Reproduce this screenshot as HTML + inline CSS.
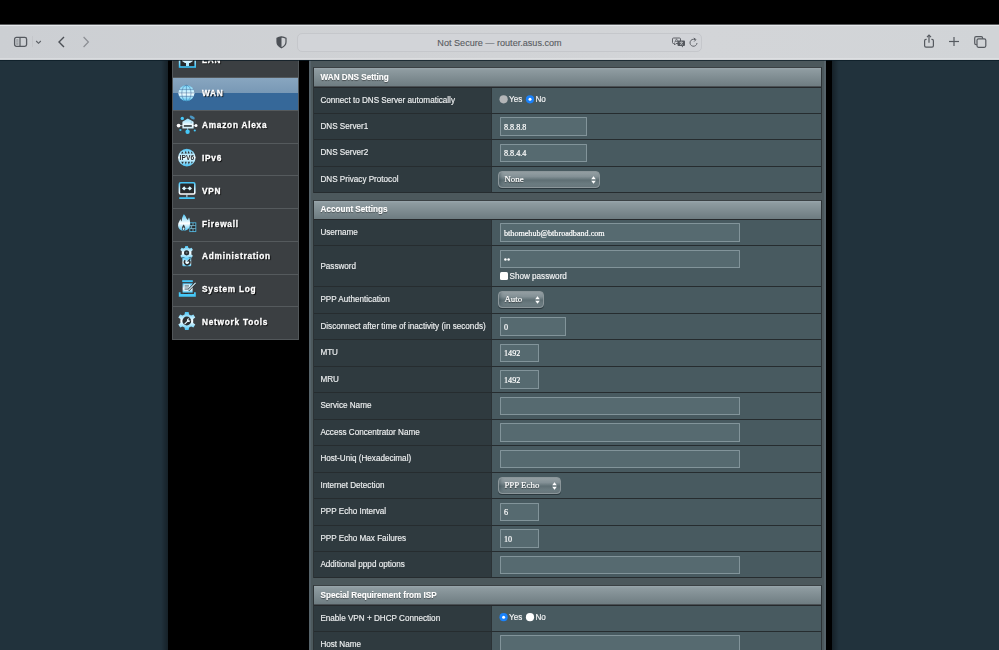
<!DOCTYPE html>
<html><head><meta charset="utf-8">
<style>
*{margin:0;padding:0;box-sizing:border-box}
html,body{width:999px;height:650px;overflow:hidden;background:#21323c;font-family:"Liberation Sans",sans-serif}
#page{will-change:transform}
.abs{position:absolute}
#blk{position:absolute;left:0;top:0;width:999px;height:24px;background:#000;z-index:20}
#tb{position:absolute;left:0;top:24px;width:999px;height:36px;background:linear-gradient(to right,#cccfd3 0,#d0d2d5 40%,#d3d5d8 70%,#d1d4d7 100%);z-index:20}
#tb .hl{position:absolute;left:0;top:0;width:999px;height:2px;background:linear-gradient(to bottom,#5a5c5e 0,#5a5c5e 1px,#e6e9ec 1px)}
#tb .lb{position:absolute;left:0;bottom:1px;width:999px;height:1px;background:rgba(255,255,255,.25)}
#url{position:absolute;left:297px;top:9px;width:405px;height:19px;border-radius:5px;background:#d2d4d8;border:1px solid #c5c7cb}
#url .t{position:absolute;left:0;width:100%;top:3.6px;text-align:center;font-size:9.1px;color:#595c62;-webkit-text-stroke:.12px #595c62;line-height:10px}
#page{position:absolute;left:0;top:0;width:999px;height:650px;background:#21323c;overflow:hidden}
#pline{z-index:19;position:absolute;left:0;top:60px;width:999px;height:1px;background:rgba(10,25,35,.7)}
#shl{position:absolute;left:161px;top:60px;width:7px;height:590px;background:linear-gradient(to right,rgba(0,0,0,0),rgba(0,0,0,.35))}
#shr{position:absolute;left:832px;top:60px;width:7px;height:590px;background:linear-gradient(to left,rgba(0,0,0,0),rgba(0,0,0,.35))}
#cont{position:absolute;left:168px;top:0;width:664px;height:650px;background:#000}
#menu{position:absolute;left:172px;top:10px;width:127px;height:329.5px;background:#3b3f42;border:1px solid #52575a;border-top:none}
.mi{position:absolute;left:0;width:125px;height:32.8px;border-top:1px solid #555a5d}
.mi .l{position:absolute;left:29px;top:9.5px;font-size:8.3px;font-weight:bold;letter-spacing:.74px;color:#fff;-webkit-text-stroke:.3px #fff;text-shadow:.8px .8px 1px #000;line-height:10px;white-space:nowrap}
.mi svg{position:absolute;left:4px;top:5px;filter:blur(.2px)}
.sel{background:linear-gradient(to bottom,#88a6c0 0,#7898b5 15px,#366899 15px,#366899 100%)}
#panel{position:absolute;left:309px;top:0;width:517px;height:650px;background:#4c585c;border-left:2px solid #56636a;border-right:2px solid #56636a}
.tbl{position:absolute;left:313px;width:509px;background:#2f3a3f;border:1px solid #2c3235;border-top-color:#3b4144;border-bottom:none}
.hd{position:absolute;left:0;top:0;width:507px;height:19px;background:linear-gradient(to bottom,#9aa7ad 0,#8e9ba0 2px,#6d7b80 100%);border-bottom:1px solid #25292c}
.hd2{box-shadow:inset 0 -1px 0 #4a5054}
.hd .t{position:absolute;left:6.6px;top:5px;font-size:8.15px;font-weight:bold;color:#fff;-webkit-text-stroke:.15px #fff;line-height:10px;text-shadow:0 .6px 1px rgba(0,0,0,.45)}
.r{position:absolute;left:0;width:507px;border-bottom:1px solid #262c2f}
.r .th{position:absolute;left:0;top:0;width:177px;height:100%;background:#2f3a3f}
.r .td{position:absolute;left:177px;top:0;width:330px;height:100%;background:#485a60;box-shadow:inset 1px 0 0 #2b3235}
.r .lab{position:absolute;left:6.4px;font-size:8.15px;color:#eef0f1;-webkit-text-stroke:.15px #eef0f1;line-height:10px;white-space:nowrap}
.inp{position:absolute;background:#566a70;border:1px solid #82949a;border-radius:.5px}
.inp .v{position:absolute;left:3px;font-family:"Liberation Serif",serif;font-size:8.15px;color:#fff;-webkit-text-stroke:.2px #fff;line-height:10px;white-space:nowrap}
.sl{position:absolute;border-radius:4px;border:1px solid #8b969a;background:linear-gradient(to bottom,#949fa3 0%,#849196 30%,#65757a 50%,#5f6f74 58%,#718085 80%,#889599 100%);box-shadow:0 1px 0 rgba(20,30,35,.55),inset 2px -2px 3px rgba(40,60,70,.35)}
.sl .v{position:absolute;left:5.4px;top:2px;text-shadow:0 1px 1px rgba(0,0,0,.55);font-family:"Liberation Serif",serif;font-size:8.9px;color:#fff;-webkit-text-stroke:.2px #fff;line-height:10px;white-space:nowrap}
.sl svg{position:absolute;right:3.5px;top:3.8px}
.rad{position:absolute;width:8px;height:8px;border-radius:50%}
.dot{position:absolute;left:2.7px;top:2.7px;width:2.6px;height:2.6px;border-radius:50%;background:#fff}
.cb{position:absolute;width:8px;height:8px;background:#fff;border-radius:1.5px}
.rt{position:absolute;font-size:8.15px;color:#f4f5f6;line-height:10px;-webkit-text-stroke:.15px #f4f5f6;white-space:nowrap}
</style></head><body>
<svg width="0" height="0" style="position:absolute"><defs>
<linearGradient id="gv" x1="0" y1="0" x2="0" y2="1"><stop offset="0" stop-color="#ffffff"/><stop offset=".45" stop-color="#d8f3ff"/><stop offset="1" stop-color="#35c0f5"/></linearGradient>
<linearGradient id="gvi" x1="0" y1="0" x2="0" y2="1"><stop offset="0" stop-color="#45c4f6"/><stop offset=".55" stop-color="#c8efff"/><stop offset="1" stop-color="#ffffff"/></linearGradient>
<linearGradient id="gw" x1="0" y1="0" x2="0" y2="1"><stop offset="0" stop-color="#ffffff"/><stop offset="1" stop-color="#9fe3ff"/></linearGradient>
<linearGradient id="gv2" x1="0" y1="0" x2="0" y2="1"><stop offset="0" stop-color="#8fdcfa"/><stop offset=".7" stop-color="#ffffff"/><stop offset="1" stop-color="#bfe9f9"/></linearGradient>
<linearGradient id="gv3" x1="0" y1="0" x2="0" y2="1"><stop offset="0" stop-color="#4cc6f6"/><stop offset=".6" stop-color="#ffffff"/><stop offset="1" stop-color="#4cc6f6"/></linearGradient>
<linearGradient id="gglobe" x1="0" y1="0" x2="0" y2="1"><stop offset="0" stop-color="#6fd4fb"/><stop offset=".55" stop-color="#f4fdff"/><stop offset="1" stop-color="#49c3f5"/></linearGradient>
<linearGradient id="gglobe2" x1="0" y1="0" x2="0" y2="1"><stop offset="0" stop-color="#4ec3f3"/><stop offset=".5" stop-color="#f6fdff"/><stop offset="1" stop-color="#45c0f3"/></linearGradient>
<linearGradient id="gflame" x1="0" y1="0" x2="0" y2="1"><stop offset="0" stop-color="#4cc6f6"/><stop offset=".55" stop-color="#ffffff"/><stop offset="1" stop-color="#4cc6f6"/></linearGradient>
<linearGradient id="ggear" x1="0" y1="0" x2="0" y2="1"><stop offset="0" stop-color="#45c4f6"/><stop offset=".5" stop-color="#ffffff"/><stop offset="1" stop-color="#45c4f6"/></linearGradient>
</defs></svg>
<div id="blk"></div>
<div id="tb">
  <div class="hl"></div><div class="lb"></div>
  <!-- sidebar icon -->
  <svg class="abs" style="left:13px;top:11px" width="16" height="13" viewBox="0 0 16 13">
    <rect x="1.6" y="2.4" width="12" height="9" rx="1.8" fill="none" stroke="#55595f" stroke-width="1.3"/>
    <line x1="7" y1="2.6" x2="7" y2="11.2" stroke="#55595f" stroke-width="1.2"/>
    <rect x="3.2" y="4.2" width="2.2" height="5.6" fill="#9a9da2"/>
    <line x1="3.2" y1="6" x2="5.4" y2="6" stroke="#cdd0d4" stroke-width=".5"/>
    <line x1="3.2" y1="7.8" x2="5.4" y2="7.8" stroke="#cdd0d4" stroke-width=".5"/>
  </svg>
  <div class="abs" style="left:32px;top:12px;width:1px;height:11px;background:#c4c6ca"></div>
  <svg class="abs" style="left:35px;top:16px" width="7" height="5" viewBox="0 0 7 5"><polyline points="1.2,1 3.5,3.3 5.8,1" fill="none" stroke="#5a5e64" stroke-width="1.1"/></svg>
  <svg class="abs" style="left:57px;top:12px" width="9" height="12" viewBox="0 0 9 12"><polyline points="7,1 2,6 7,11" fill="none" stroke="#4b4f55" stroke-width="1.4"/></svg>
  <svg class="abs" style="left:82px;top:12px" width="9" height="12" viewBox="0 0 9 12"><polyline points="1.6,1 6.4,6 1.6,11" fill="none" stroke="#8b8e93" stroke-width="1.2"/></svg>
  <!-- shield -->
  <svg class="abs" style="left:276px;top:11px" width="11" height="14" viewBox="0 0 11 14">
    <path d="M5.5 1.8 Q8.2 2.3 10 3.2 L10 7 Q10 10.6 5.5 12.8 Q1 10.6 1 7 L1 3.2 Q2.8 2.3 5.5 1.8Z" fill="none" stroke="#4c5056" stroke-width="1.2"/>
    <path d="M5.5 1.8 Q2.8 2.3 1 3.2 L1 7 Q1 10.6 5.5 12.8Z" fill="#4c5056"/>
  </svg>
  <div id="url"><div class="t">Not Secure — router.asus.com</div>
    <svg class="abs" style="left:374px;top:3px" width="14" height="11" viewBox="0 0 14 11">
      <path d="M1.5 1 H7.5 Q8.5 1 8.5 2 V5.5 Q8.5 6.5 7.5 6.5 H4 L2.5 8 V6.5 H1.5 Q0.5 6.5 0.5 5.5 V2 Q0.5 1 1.5 1Z" fill="none" stroke="#606369" stroke-width="1"/>
      <path d="M2.6 5.6 L4.5 1.8 L6.2 5.2 M3.2 4.4 H5.6" fill="none" stroke="#606369" stroke-width=".8"/>
      <path d="M6.5 3.5 H12 Q13 3.5 13 4.5 V8 Q13 9 12 9 H11 V10.5 L9.5 9 H6.5 Q5.5 9 5.5 8 V4.5 Q5.5 3.5 6.5 3.5Z" fill="#55585e"/>
      <path d="M7.6 5.4 H11 M9.3 4.4 V5.4 M8 8 L10.6 5.6 M8.4 5.8 L10.8 8" fill="none" stroke="#c9cbcf" stroke-width=".7"/>
    </svg>
    <svg class="abs" style="left:391px;top:2.6px" width="10" height="11" viewBox="0 0 10 11">
      <path d="M8 6 A3.5 3.5 0 1 1 6 2.6" fill="none" stroke="#606369" stroke-width="1"/>
      <polyline points="4.8,1 7,2.6 5.2,4.5" fill="none" stroke="#606369" stroke-width="1"/>
    </svg>
  </div>
  <!-- share -->
  <svg class="abs" style="left:923px;top:10px" width="12" height="14" viewBox="0 0 12 14">
    <path d="M3.6 5.4 H3 Q1.6 5.4 1.6 6.8 V11.8 Q1.6 13.2 3 13.2 H9 Q10.4 13.2 10.4 11.8 V6.8 Q10.4 5.4 9 5.4 H8.4" fill="none" stroke="#55595f" stroke-width="1.2"/>
    <line x1="6" y1="1.2" x2="6" y2="8.8" stroke="#55595f" stroke-width="1.2"/>
    <polyline points="4,3.2 6,1.2 8,3.2" fill="none" stroke="#55595f" stroke-width="1.2"/>
  </svg>
  <svg class="abs" style="left:948px;top:12px" width="12" height="11" viewBox="0 0 12 11">
    <line x1="6" y1="1.1" x2="6" y2="9.9" stroke="#55595f" stroke-width="1.2"/>
    <line x1="1" y1="5.5" x2="11" y2="5.5" stroke="#55595f" stroke-width="1.2"/>
  </svg>
  <svg class="abs" style="left:973px;top:11px" width="14" height="13" viewBox="0 0 14 13">
    <path d="M3.8 9.6 H3.1 Q1.7 9.6 1.7 8.2 V3 Q1.7 1.6 3.1 1.6 H8.2 Q9.6 1.6 9.6 3 V3.8" fill="none" stroke="#55595f" stroke-width="1.2"/>
    <rect x="4" y="3.8" width="8.8" height="8.5" rx="1.5" fill="none" stroke="#55595f" stroke-width="1.2"/>
  </svg>
</div>

<div id="page">
  <div id="shl"></div><div id="shr"></div>
  <div id="cont"></div>
  <div id="menu">
<div class="mi" style="top:34.25px"><svg style="position:absolute;left:1px;top:-1.25px;overflow:visible" width="26" height="26" viewBox="174 44 26 26">
<rect x="179.6" y="50" width="15.6" height="17" fill="#26292b" stroke="url(#gv)" stroke-width="1.6"/>
<path d="M182 58.5 H193 V61 L190 63 H189 V66 H186 V63 H185 L182 61Z" fill="url(#gw)"/>
</svg><div class="l">LAN</div></div>
<div class="mi sel" style="top:67.00px"><svg style="position:absolute;left:1px;top:2.00px;overflow:visible" width="26" height="26" viewBox="174 80 26 26">
<circle cx="186.4" cy="93.2" r="8" fill="url(#gglobe)"/>
<g fill="none" stroke="#3f6f9c" stroke-opacity=".7" stroke-width=".75">
<line x1="186.4" y1="85.2" x2="186.4" y2="101.2"/>
<ellipse cx="186.4" cy="93.2" rx="4.6" ry="8"/>
<line x1="179" y1="89.4" x2="193.8" y2="89.4"/>
<line x1="178.4" y1="92.9" x2="194.4" y2="92.9"/>
<line x1="179" y1="96.4" x2="193.8" y2="96.4"/>
</g>
</svg><div class="l">WAN</div></div>
<div class="mi" style="top:99.75px"><svg style="position:absolute;left:1px;top:1.25px;overflow:visible" width="26" height="26" viewBox="174 112 26 26">
<g stroke="#c8e8f5" stroke-width=".7"><line x1="178.6" y1="125.6" x2="196" y2="125.6"/><line x1="187.6" y1="128" x2="187.6" y2="131.7"/></g>
<circle cx="178.6" cy="125.6" r="1.9" fill="#ffffff"/>
<circle cx="196" cy="125.6" r="1.5" fill="#ffffff"/>
<circle cx="182.3" cy="118.4" r="1.7" fill="#45c8f8"/>
<circle cx="187.6" cy="131.7" r="2.2" fill="#45c8f8"/>
<circle cx="180.4" cy="130" r="1.1" fill="#45c8f8"/>
<circle cx="194.8" cy="130.5" r="1.1" fill="#45c8f8"/>
<ellipse cx="192.2" cy="117.5" rx="2.8" ry="1.4" transform="rotate(30 192.2 117.5)" fill="#4b97c4"/>
<path d="M182.4 121.8 L187.8 118.6 L193.6 121.8 V128.6 H182.4Z" fill="url(#gv2)"/>
<rect x="190.6" y="121.4" width="1.2" height="2" fill="#9fc9dc"/>
<rect x="183.8" y="125" width="8" height="1.9" fill="#4a5559"/>
</svg><div class="l">Amazon Alexa</div></div>
<div class="mi" style="top:132.50px"><svg style="position:absolute;left:1px;top:0.50px;overflow:visible" width="26" height="26" viewBox="174 144 26 26">
<circle cx="186.8" cy="157.6" r="8.8" fill="url(#gglobe2)"/>
<g fill="#2c3134">
<path d="M181 153.4 L182.4 151.4 L183.6 153.4Z M184.6 153.4 L185.8 150.8 L186.8 153.4Z M187.6 153.4 L188.6 150.8 L189.8 153.4Z M190.8 153.4 L191.6 151.6 L192.8 153.4Z"/>
<path d="M181.2 161.8 L182.6 164 L183.8 161.8Z M184.8 161.8 L185.8 164.6 L186.8 161.8Z M187.8 161.8 L188.8 164.6 L190 161.8Z M191 161.8 L191.8 163.8 L192.8 161.8Z"/>
</g>
<text x="187" y="160.2" text-anchor="middle" font-family="Liberation Sans" font-weight="bold" font-size="6.6" fill="#2a2e31" letter-spacing=".15">IPV6</text>
</svg><div class="l">IPv6</div></div>
<div class="mi" style="top:165.25px"><svg style="position:absolute;left:1px;top:0.75px;overflow:visible" width="26" height="26" viewBox="174 177 26 26">
<rect x="179.4" y="182.8" width="15.4" height="11.2" rx="1.2" fill="#26292b" stroke="url(#gvi)" stroke-width="1.6"/>
<path d="M181.9 188.4 L184.2 186.2 L186.1 188.4 L184.2 190.6Z M187.8 188.4 L189.7 186.2 L192 188.4 L189.7 190.6Z" fill="#d8f6ff"/>
<line x1="185" y1="188.4" x2="188.6" y2="188.4" stroke="#d8f6ff" stroke-width=".6"/>
<line x1="186.9" y1="194.6" x2="186.9" y2="197.5" stroke="#bfeeff" stroke-width="1"/>
<rect x="179" y="197.2" width="16" height="1.8" rx=".9" fill="#45c8f8"/>
</svg><div class="l">VPN</div></div>
<div class="mi" style="top:198.00px"><svg style="position:absolute;left:1px;top:0.00px;overflow:visible" width="26" height="26" viewBox="174 209 26 26">
<rect x="189.8" y="222.8" width="6" height="8.8" fill="#26292b" stroke="#4fb6e0" stroke-width=".9"/>
<g stroke="#8fd3ee" stroke-width=".7"><line x1="190" y1="225.6" x2="195.6" y2="225.6"/><line x1="190" y1="228.6" x2="195.6" y2="228.6"/><line x1="193" y1="222.8" x2="193" y2="225.6"/><line x1="191.6" y1="225.6" x2="191.6" y2="228.6"/><line x1="193" y1="228.6" x2="193" y2="231.6"/></g>
<path d="M183.8 214.2 C186.5 216.5 186.2 219 188 220 C188.3 218.8 188.6 218 189 217.6 C190.2 220 190.4 224 189.4 227 C188.6 229.5 186.5 230.8 183.6 230.8 C180.6 230.8 178.4 229 178.1 226 C177.9 223 179.5 221 180.4 219 C180.8 220.3 181.2 221 181.8 221.4 C181.6 218.8 182.6 216.2 183.8 214.2Z" fill="url(#gflame)"/>
<path d="M183.6 224.6 C184.8 226 185.4 227.6 185.2 229 C185 230 184.3 230.6 183.6 230.6 C182.8 230.6 182.1 230 182 229 C181.8 227.6 182.5 226 183.6 224.6Z" fill="#3a3f42"/>
<ellipse cx="183.6" cy="228.8" rx=".9" ry="1.3" fill="#c9f0ff"/>
</svg><div class="l">Firewall</div></div>
<div class="mi" style="top:230.75px"><svg style="position:absolute;left:1px;top:0.25px;overflow:visible" width="26" height="26" viewBox="174 242 26 26">
<rect x="182.4" y="257.4" width="8.8" height="8.8" rx="1" fill="url(#gv3)"/>
<path d="M189.3 260.4 A2.7 2.7 0 1 1 185.2 260.2" fill="none" stroke="#2a2e31" stroke-width="1.5"/><line x1="187.6" y1="261.6" x2="190.4" y2="258.6" stroke="#2a2e31" stroke-width="1.1"/>
<g transform="translate(186.6 252.8)">
<path d="M-1.3 -6.8 H1.3 L1.7 -5 L3.2 -4.2 L5 -5 L6.3 -2.9 L4.8 -1.6 V1.6 L6.3 2.9 L5 5 L3.2 4.2 L1.7 5 L1.3 6.8 H-1.3 L-1.7 5 L-3.2 4.2 L-5 5 L-6.3 2.9 L-4.8 1.6 V-1.6 L-6.3 -2.9 L-5 -5 L-3.2 -4.2 L-1.7 -5Z" fill="url(#ggear)"/>
<circle r="2.6" fill="#2a2e31"/><circle r="1" fill="#6a7479"/>
</g>
</svg><div class="l">Administration</div></div>
<div class="mi" style="top:263.50px"><svg style="position:absolute;left:1px;top:0.50px;overflow:visible" width="26" height="26" viewBox="174 275 26 26">
<rect x="182.2" y="280.2" width="10.6" height="1.9" fill="#45c8f8"/>
<rect x="182.6" y="283.3" width="10" height="9.3" fill="url(#gv3)"/>
<rect x="184" y="284.4" width="6" height="6.6" fill="#dff6ff"/>
<g stroke="#4a5358" stroke-width=".6"><line x1="184.6" y1="285.4" x2="189" y2="285.4"/><line x1="184.6" y1="286.8" x2="189" y2="286.8"/><line x1="184.6" y1="288.2" x2="188" y2="288.2"/><line x1="184.6" y1="289.6" x2="187" y2="289.6"/></g>
<line x1="195.6" y1="282.8" x2="188.2" y2="290.4" stroke="#2a2e31" stroke-width="2.4"/>
<line x1="195.6" y1="282.8" x2="188.2" y2="290.4" stroke="#d6f3ff" stroke-width="1.1"/>
<path d="M178.8 292.2 H180.6 V294 H194 V292.2 H195.8 V296.8 H178.8Z" fill="#45c8f8"/>
<rect x="184" y="293.2" width="4" height=".8" fill="#2a2e31"/>
</svg><div class="l">System Log</div></div>
<div class="mi" style="top:296.25px"><svg style="position:absolute;left:1px;top:-0.25px;overflow:visible" width="26" height="26" viewBox="174 307 26 26">
<g transform="translate(186.8 321)">
<path d="M-1.8 -9 H1.8 L2.3 -6.6 L4.3 -5.6 L6.6 -6.6 L8.5 -3.6 L6.4 -2.1 V2.1 L8.5 3.6 L6.6 6.6 L4.3 5.6 L2.3 6.6 L1.8 9 H-1.8 L-2.3 6.6 L-4.3 5.6 L-6.6 6.6 L-8.5 3.6 L-6.4 2.1 V-2.1 L-8.5 -3.6 L-6.6 -6.6 L-4.3 -5.6 L-2.3 -6.6Z" fill="url(#ggear)"/>
<circle r="4.4" fill="#2a2e31"/>
<path d="M-2.6 2.8 L0.2 0 C-0.2 -1.6 1 -3 2.6 -2.8 L1.6 -1.6 L2.1 -0.4 L3.2 -0.6 L3.6 -1.6 C3.8 0.2 2.2 1.4 0.8 0.9 L-1.8 3.6Z" fill="#e8f8ff"/>
</g>
</svg><div class="l">Network Tools</div></div>
  </div>
  <div id="panel"></div>
<div class="tbl" style="top:67px;height:126px"><div class="hd hd2" style="height:20px"><div class="t" style="top:4.50px">WAN DNS Setting</div></div><div class="r" style="top:20px;height:26px"><div class="th"><div class="lab" style="top:7.50px">Connect to DNS Server automatically</div></div><div class="td"><svg style="position:absolute;left:0;top:0;overflow:visible" width="1" height="1"><circle cx="12.600000000000023" cy="11.299999999999997" r="4.1" fill="#b4b6b8"/></svg><div class="rt" style="left:18px;top:7.10px">Yes</div><svg style="position:absolute;left:0;top:0;overflow:visible" width="1" height="1"><circle cx="39" cy="11.299999999999997" r="4.1" fill="#1a82fb"/><circle cx="39" cy="11.299999999999997" r="1.5" fill="#fff"/></svg><div class="rt" style="left:44.5px;top:7.10px">No</div></div></div><div class="r" style="top:46px;height:26px"><div class="th"><div class="lab" style="top:7.50px">DNS Server1</div></div><div class="td"><div class="inp" style="left:9px;top:3px;width:87px;height:19px"><div class="v" style="top:4.60px">8.8.8.8</div></div></div></div><div class="r" style="top:72px;height:27px"><div class="th"><div class="lab" style="top:8.00px">DNS Server2</div></div><div class="td"><div class="inp" style="left:9px;top:4px;width:87px;height:18px"><div class="v" style="top:4.10px">8.8.4.4</div></div></div></div><div class="r" style="top:99px;height:26px"><div class="th"><div class="lab" style="top:7.50px">DNS Privacy Protocol</div></div><div class="td"><div class="sl" style="left:7px;top:4px;width:102px;height:17px"><div class="v">None</div><svg width="5" height="8" viewBox="0 0 5 8"><path d="M2.5 0.2 L4.8 3.2 H0.2Z M2.5 7.8 L4.8 4.8 H0.2Z" fill="#fff"/></svg></div></div></div></div>
<div class="tbl" style="top:200px;height:378px"><div class="hd" style="height:19px"><div class="t" style="top:4.00px">Account Settings</div></div><div class="r" style="top:19px;height:26px"><div class="th"><div class="lab" style="top:7.50px">Username</div></div><div class="td"><div class="inp" style="left:9px;top:3px;width:240px;height:19px"><div class="v" style="top:4.60px">bthomehub@btbroadband.com</div></div></div></div><div class="r" style="top:45px;height:41px"><div class="th"><div class="lab" style="top:15.70px">Password</div></div><div class="td"><div class="inp" style="left:9px;top:4px;width:240px;height:18px"></div><svg style="position:absolute;left:0;top:0;overflow:visible" width="1" height="1"><circle cx="14.399999999999977" cy="13.399999999999977" r="1.25" fill="#fff"/><circle cx="17.600000000000023" cy="13.399999999999977" r="1.25" fill="#fff"/></svg><div class="cb" style="left:8.5px;top:26px"></div><div class="rt" style="left:18.5px;top:25.5px">Show password</div></div></div><div class="r" style="top:86px;height:27px"><div class="th"><div class="lab" style="top:8.00px">PPP Authentication</div></div><div class="td"><div class="sl" style="left:7px;top:4px;width:46px;height:17px"><div class="v">Auto</div><svg width="5" height="8" viewBox="0 0 5 8"><path d="M2.5 0.2 L4.8 3.2 H0.2Z M2.5 7.8 L4.8 4.8 H0.2Z" fill="#fff"/></svg></div></div></div><div class="r" style="top:113px;height:26px"><div class="th"><div class="lab" style="top:7.50px">Disconnect after time of inactivity (in seconds)</div></div><div class="td"><div class="inp" style="left:9px;top:3px;width:66px;height:19px"><div class="v" style="top:4.60px">0</div></div></div></div><div class="r" style="top:139px;height:27px"><div class="th"><div class="lab" style="top:8.00px">MTU</div></div><div class="td"><div class="inp" style="left:9px;top:4px;width:39px;height:18px"><div class="v" style="top:4.10px">1492</div></div></div></div><div class="r" style="top:166px;height:26px"><div class="th"><div class="lab" style="top:7.50px">MRU</div></div><div class="td"><div class="inp" style="left:9px;top:3px;width:39px;height:19px"><div class="v" style="top:4.60px">1492</div></div></div></div><div class="r" style="top:192px;height:27px"><div class="th"><div class="lab" style="top:8.00px">Service Name</div></div><div class="td"><div class="inp" style="left:9px;top:4px;width:240px;height:18px"></div></div></div><div class="r" style="top:219px;height:26px"><div class="th"><div class="lab" style="top:7.50px">Access Concentrator Name</div></div><div class="td"><div class="inp" style="left:9px;top:3px;width:240px;height:19px"></div></div></div><div class="r" style="top:245px;height:27px"><div class="th"><div class="lab" style="top:8.00px">Host-Uniq (Hexadecimal)</div></div><div class="td"><div class="inp" style="left:9px;top:4px;width:240px;height:18px"></div></div></div><div class="r" style="top:272px;height:26px"><div class="th"><div class="lab" style="top:7.50px">Internet Detection</div></div><div class="td"><div class="sl" style="left:7px;top:4px;width:63px;height:17px"><div class="v">PPP Echo</div><svg width="5" height="8" viewBox="0 0 5 8"><path d="M2.5 0.2 L4.8 3.2 H0.2Z M2.5 7.8 L4.8 4.8 H0.2Z" fill="#fff"/></svg></div></div></div><div class="r" style="top:298px;height:27px"><div class="th"><div class="lab" style="top:8.00px">PPP Echo Interval</div></div><div class="td"><div class="inp" style="left:9px;top:4px;width:39px;height:18px"><div class="v" style="top:4.10px">6</div></div></div></div><div class="r" style="top:325px;height:26px"><div class="th"><div class="lab" style="top:7.50px">PPP Echo Max Failures</div></div><div class="td"><div class="inp" style="left:9px;top:3px;width:39px;height:19px"><div class="v" style="top:4.60px">10</div></div></div></div><div class="r" style="top:351px;height:26px"><div class="th"><div class="lab" style="top:7.50px">Additional pppd options</div></div><div class="td"><div class="inp" style="left:9px;top:4px;width:240px;height:18px"></div></div></div></div>
<div class="tbl" style="top:585px;height:116px"><div class="hd hd2" style="height:20px"><div class="t" style="top:4.50px">Special Requirement from ISP</div></div><div class="r" style="top:20px;height:26px"><div class="th"><div class="lab" style="top:7.50px">Enable VPN + DHCP Connection</div></div><div class="td"><svg style="position:absolute;left:0;top:0;overflow:visible" width="1" height="1"><circle cx="12.600000000000023" cy="11.200000000000045" r="4.1" fill="#1a82fb"/><circle cx="12.600000000000023" cy="11.200000000000045" r="1.5" fill="#fff"/></svg><div class="rt" style="left:18px;top:7.00px">Yes</div><svg style="position:absolute;left:0;top:0;overflow:visible" width="1" height="1"><circle cx="39" cy="11.200000000000045" r="4.1" fill="#ffffff"/></svg><div class="rt" style="left:44.5px;top:7.00px">No</div></div></div><div class="r" style="top:46px;height:69px"><div class="th"><div class="lab" style="top:7.50px">Host Name</div></div><div class="td"><div class="inp" style="left:9px;top:3px;width:240px;height:19px"></div></div></div></div>
</div>
<div id="pline"></div>
</body></html>
